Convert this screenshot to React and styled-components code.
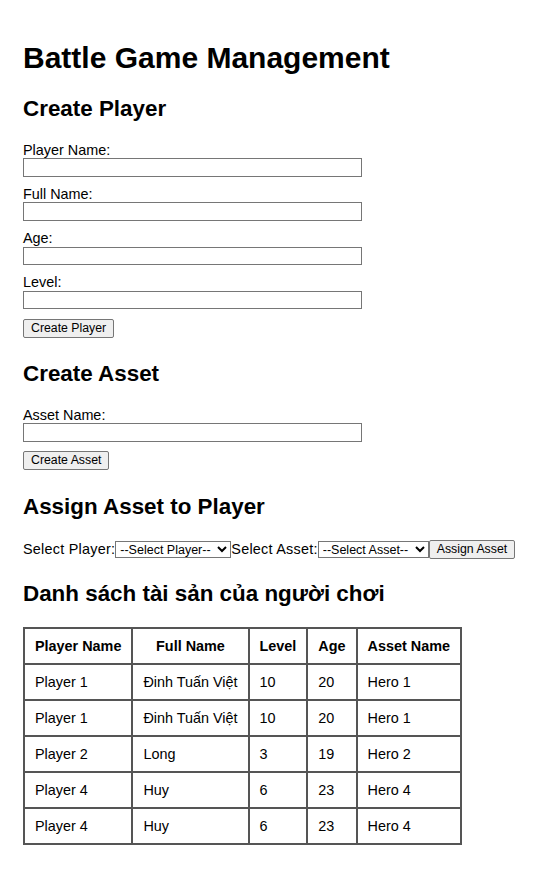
import styled, { createGlobalStyle } from "styled-components";

const GlobalStyle = createGlobalStyle`
  body {
    margin: 0;
    background: #fff;
    color: #000;
    font-family: "Liberation Sans", Arial, sans-serif;
    font-size: 14.4px;
  }
`;

const Page = styled.div`
  padding: 41px 23px 30px 23px;
`;

const Title = styled.h1`
  font-size: 30px;
  line-height: 34px;
  font-weight: bold;
  margin: 0 0 21px 0;
`;

const SectionTitle = styled.h2`
  font-size: 22.4px;
  line-height: 25px;
  font-weight: bold;
  margin: ${(p) => p.$top || 0}px 0 ${(p) => p.$bottom || 21}px 0;
`;

const Field = styled.div`
  display: flex;
  flex-direction: column;
  align-items: flex-start;
  margin-bottom: 9.3px;
`;

const Label = styled.label`
  line-height: 16.5px;
`;

const InlineLabel = styled.label`
  line-height: 17px;
  letter-spacing: 0.25px;
`;

const TextInput = styled.input`
  box-sizing: border-box;
  width: 339px;
  height: 18.5px;
  border: 1px solid #767676;
  border-radius: 0;
  padding: 1px 2px;
  font-size: 12px;
  font-family: "Liberation Sans", Arial, sans-serif;
`;

const Button = styled.button`
  box-sizing: border-box;
  height: 19px;
  padding: 0 7px;
  font-size: 12.3px;
  font-family: "Liberation Sans", Arial, sans-serif;
  color: #000;
  background: #efefef;
  border: 1px solid #767676;
  border-radius: 2px;
`;

const AssignRow = styled.div`
  display: flex;
  align-items: center;
`;

const Select = styled.select`
  box-sizing: border-box;
  width: ${(p) => p.$width}px;
  height: 17px;
  padding: 0;
  font-size: 12.5px;
  font-family: "Liberation Sans", Arial, sans-serif;
  border: 1px solid #767676;
  border-radius: 0;
  background: #fff;
  color: #000;
`;

const Table = styled.table`
  border-collapse: collapse;
  border: 2px solid #555;
  font-size: 14.4px;
`;

const Th = styled.th`
  border: 2px solid #555;
  padding: 9px 10px;
  line-height: 16px;
  font-weight: bold;
  text-align: center;
`;

const Td = styled.td`
  border: 2px solid #555;
  padding: 9px 10px;
  line-height: 16px;
  text-align: left;
`;

const rows = [
  ["Player 1", "Đinh Tuấn Việt", "10", "20", "Hero 1"],
  ["Player 1", "Đinh Tuấn Việt", "10", "20", "Hero 1"],
  ["Player 2", "Long", "3", "19", "Hero 2"],
  ["Player 4", "Huy", "6", "23", "Hero 4"],
  ["Player 4", "Huy", "6", "23", "Hero 4"],
];

export default function App() {
  return (
    <>
      <GlobalStyle />
      <Page>
        <Title>Battle Game Management</Title>

        <SectionTitle $bottom={20.5}>Create Player</SectionTitle>
        <Field>
          <Label>Player Name:</Label>
          <TextInput type="text" />
        </Field>
        <Field>
          <Label>Full Name:</Label>
          <TextInput type="text" />
        </Field>
        <Field>
          <Label>Age:</Label>
          <TextInput type="number" />
        </Field>
        <Field>
          <Label>Level:</Label>
          <TextInput type="number" />
        </Field>
        <Button>Create Player</Button>

        <SectionTitle $top={23}>Create Asset</SectionTitle>
        <Field>
          <Label>Asset Name:</Label>
          <TextInput type="text" />
        </Field>
        <Button>Create Asset</Button>

        <SectionTitle $top={24}>Assign Asset to Player</SectionTitle>
        <AssignRow>
          <InlineLabel>Select Player:</InlineLabel>
          <Select $width={116}>
            <option>--Select Player--</option>
          </Select>
          <InlineLabel>Select Asset:</InlineLabel>
          <Select $width={111}>
            <option>--Select Asset--</option>
          </Select>
          <Button>Assign Asset</Button>
        </AssignRow>

        <SectionTitle $top={22}>Danh sách tài sản của người chơi</SectionTitle>
        <Table>
          <thead>
            <tr>
              <Th>Player Name</Th>
              <Th>Full Name</Th>
              <Th>Level</Th>
              <Th>Age</Th>
              <Th>Asset Name</Th>
            </tr>
          </thead>
          <tbody>
            {rows.map((r, i) => (
              <tr key={i}>
                {r.map((c, j) => (
                  <Td key={j}>{c}</Td>
                ))}
              </tr>
            ))}
          </tbody>
        </Table>
      </Page>
    </>
  );
}
